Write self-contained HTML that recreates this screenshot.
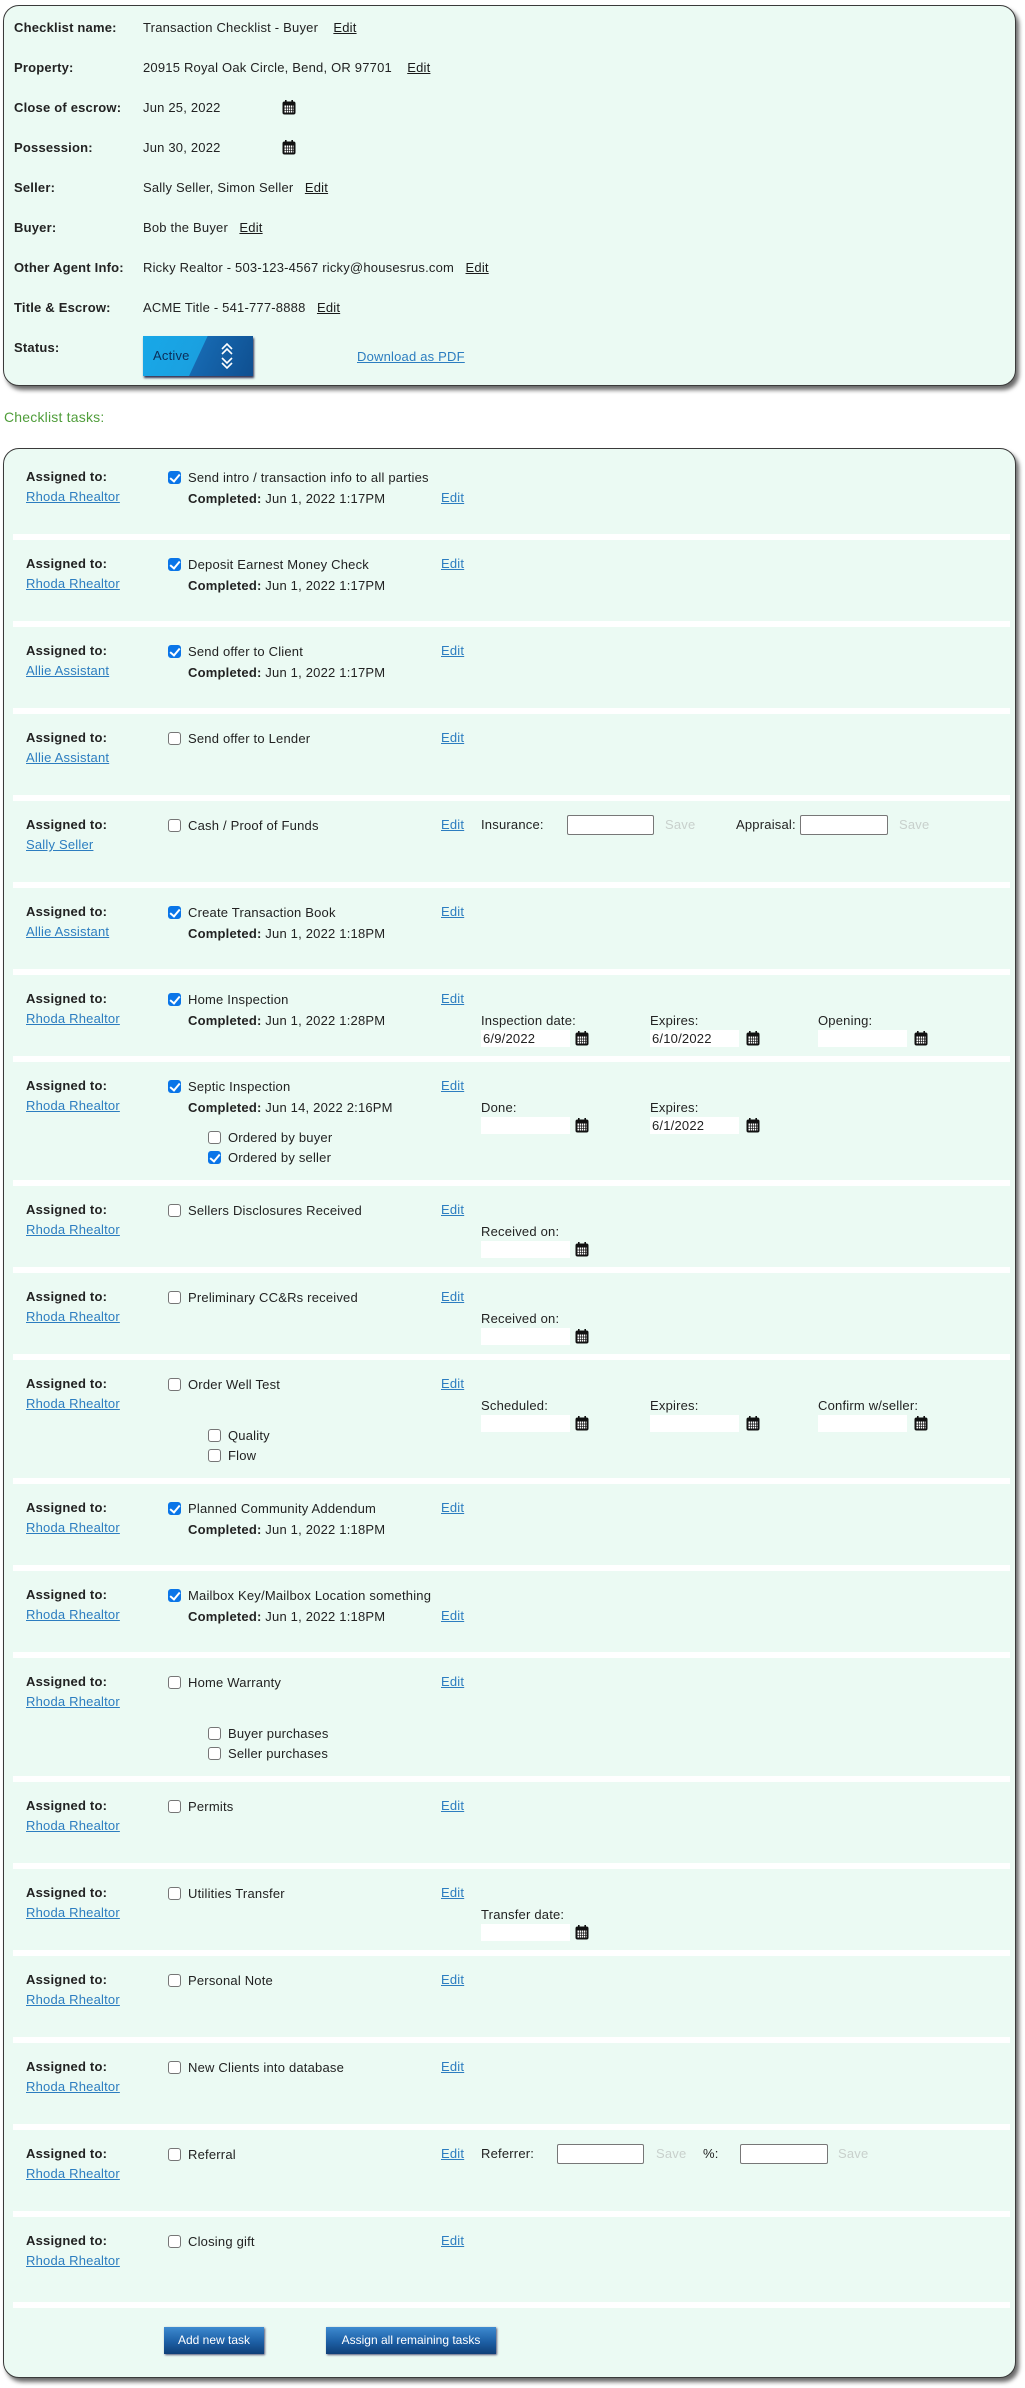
<!DOCTYPE html>
<html><head><meta charset="utf-8">
<style>
*{box-sizing:border-box;margin:0;padding:0}
body{width:1025px;height:2388px;background:#fff;font-family:"Liberation Sans",sans-serif;font-size:13px;letter-spacing:0.2px;color:#222;position:relative;overflow:hidden}
.panel{position:absolute;left:3px;width:1013px;background:#ebfaf3;border:1px solid #3a3a3a;border-radius:16px;box-shadow:3px 4px 4px #6a6a6a}
.a{position:absolute;white-space:nowrap;line-height:16px}
b{font-weight:bold}
.lnk{color:#2c7dc0;text-decoration:underline}
.ed{color:#1a1a1a;text-decoration:underline}
.row{position:absolute;left:0;width:1025px}
.band{position:absolute;left:13px;width:997px;height:6px;background:#fff}
.cb{position:absolute;width:13px;height:13px;border-radius:3px;border:1px solid #767676;background:#fff}
.cb.on{background:#0a75e8;border-color:#0a75e8}
.cb.on:after{content:"";position:absolute;left:3px;top:0px;width:4px;height:8px;border:solid #fff;border-width:0 2px 2px 0;transform:rotate(40deg)}
.inp{position:absolute;height:20px;background:#fff;border:1px solid #777;border-radius:2px}
.din{position:absolute;height:17px;width:89px;background:#fff;padding-left:2px;line-height:17px}
.cal{position:absolute;width:14px;height:15px}
.save{color:#c8d0cc}
.btn{position:absolute;height:27px;background:linear-gradient(#3d8ad0,#1d5fa5 55%,#0f3f78);color:#fff;text-align:center;line-height:27px;font-size:12px;letter-spacing:0;box-shadow:1px 1px 2px #557}
</style></head><body>
<svg width="0" height="0" style="position:absolute"><defs><symbol id="c" viewBox="0 0 14 15"><rect x="0.5" y="1.5" width="13" height="13" rx="2" fill="#111"/><rect x="3" y="0" width="1.6" height="3" fill="#111"/><rect x="9.4" y="0" width="1.6" height="3" fill="#111"/><rect x="2.5" y="5.5" width="9" height="7" fill="#fff"/><path d="M4.5 5.5v7M6.5 5.5v7M8.5 5.5v7M10.5 5.5v7M2.5 8h9M2.5 10.3h9" stroke="#111" stroke-width="0.7"/></symbol></defs></svg>

<div class="panel" style="top:5px;height:381px"></div>
<div class="a" style="left:14px;top:20px"><b>Checklist name:</b></div><div class="a" style="left:143px;top:20px">Transaction Checklist - Buyer &nbsp;&nbsp; <span class="ed">Edit</span></div>
<div class="a" style="left:14px;top:60px"><b>Property:</b></div><div class="a" style="left:143px;top:60px">20915 Royal Oak Circle, Bend, OR 97701 &nbsp;&nbsp; <span class="ed">Edit</span></div>
<div class="a" style="left:14px;top:100px"><b>Close of escrow:</b></div><div class="a" style="left:143px;top:100px">Jun 25, 2022</div><svg class="cal" style="left:282px;top:100px"><use href="#c"/></svg>
<div class="a" style="left:14px;top:140px"><b>Possession:</b></div><div class="a" style="left:143px;top:140px">Jun 30, 2022</div><svg class="cal" style="left:282px;top:140px"><use href="#c"/></svg>
<div class="a" style="left:14px;top:180px"><b>Seller:</b></div><div class="a" style="left:143px;top:180px">Sally Seller, Simon Seller &nbsp; <span class="ed">Edit</span></div>
<div class="a" style="left:14px;top:220px"><b>Buyer:</b></div><div class="a" style="left:143px;top:220px">Bob the Buyer &nbsp; <span class="ed">Edit</span></div>
<div class="a" style="left:14px;top:260px"><b>Other Agent Info:</b></div><div class="a" style="left:143px;top:260px">Ricky Realtor - 503-123-4567 ricky@housesrus.com &nbsp; <span class="ed">Edit</span></div>
<div class="a" style="left:14px;top:300px"><b>Title &amp; Escrow:</b></div><div class="a" style="left:143px;top:300px">ACME Title - 541-777-8888 &nbsp; <span class="ed">Edit</span></div>
<div class="a" style="left:14px;top:340px"><b>Status:</b></div>
<div style="position:absolute;left:143px;top:336px;width:110px;height:40px;background:linear-gradient(115deg,#18a8e8 0,#1aa0e0 50%,#1668b0 50.5%,#0f4f90);box-shadow:1px 2px 2px #335"></div>
<div class="a" style="left:153px;top:348px;color:#0b2e5a;font-size:13px">Active</div>
<svg style="position:absolute;left:220px;top:340px" width="14" height="32" viewBox="0 0 14 32"><path d="M2 9l5-5 5 5M2 14l5-5 5 5M2 18l5 5 5-5M2 23l5 5 5-5" fill="none" stroke="#fff" stroke-width="1.6"/></svg>
<div class="a lnk" style="left:357px;top:349px">Download as PDF</div>

<div class="a" style="left:4px;top:409px;color:#4f9d3a;font-size:14px">Checklist tasks:</div>

<div class="panel" style="top:448px;height:1930px"></div>

<div class="row" style="top:452px;height:87px">
<div class="a" style="left:26px;top:17px"><b>Assigned to:</b></div><div class="a lnk" style="left:26px;top:37px">Rhoda Rhealtor</div>
<div class="cb on" style="left:168px;top:19px"></div><div class="a" style="left:188px;top:18px">Send intro / transaction info to all parties</div>
<div class="a" style="left:188px;top:39px"><b>Completed:</b> Jun 1, 2022 1:17PM</div><div class="a lnk" style="left:441px;top:38px">Edit</div>
<div class="band" style="top:82px"></div></div>

<div class="row" style="top:539px;height:87px">
<div class="a" style="left:26px;top:17px"><b>Assigned to:</b></div><div class="a lnk" style="left:26px;top:37px">Rhoda Rhealtor</div>
<div class="cb on" style="left:168px;top:19px"></div><div class="a" style="left:188px;top:18px">Deposit Earnest Money Check</div>
<div class="a" style="left:188px;top:39px"><b>Completed:</b> Jun 1, 2022 1:17PM</div><div class="a lnk" style="left:441px;top:17px">Edit</div>
<div class="band" style="top:82px"></div></div>

<div class="row" style="top:626px;height:87px">
<div class="a" style="left:26px;top:17px"><b>Assigned to:</b></div><div class="a lnk" style="left:26px;top:37px">Allie Assistant</div>
<div class="cb on" style="left:168px;top:19px"></div><div class="a" style="left:188px;top:18px">Send offer to Client</div>
<div class="a" style="left:188px;top:39px"><b>Completed:</b> Jun 1, 2022 1:17PM</div><div class="a lnk" style="left:441px;top:17px">Edit</div>
<div class="band" style="top:82px"></div></div>

<div class="row" style="top:713px;height:87px">
<div class="a" style="left:26px;top:17px"><b>Assigned to:</b></div><div class="a lnk" style="left:26px;top:37px">Allie Assistant</div>
<div class="cb" style="left:168px;top:19px"></div><div class="a" style="left:188px;top:18px">Send offer to Lender</div>
<div class="a lnk" style="left:441px;top:17px">Edit</div>
<div class="band" style="top:82px"></div></div>

<div class="row" style="top:800px;height:87px">
<div class="a" style="left:26px;top:17px"><b>Assigned to:</b></div><div class="a lnk" style="left:26px;top:37px">Sally Seller</div>
<div class="cb" style="left:168px;top:19px"></div><div class="a" style="left:188px;top:18px">Cash / Proof of Funds</div>
<div class="a lnk" style="left:441px;top:17px">Edit</div>
<div class="a" style="left:481px;top:17px">Insurance:</div><div class="inp" style="left:567px;top:15px;width:87px"></div><div class="a save" style="left:665px;top:17px">Save</div>
<div class="a" style="left:736px;top:17px">Appraisal:</div><div class="inp" style="left:800px;top:15px;width:88px"></div><div class="a save" style="left:899px;top:17px">Save</div>
<div class="band" style="top:82px"></div></div>

<div class="row" style="top:887px;height:87px">
<div class="a" style="left:26px;top:17px"><b>Assigned to:</b></div><div class="a lnk" style="left:26px;top:37px">Allie Assistant</div>
<div class="cb on" style="left:168px;top:19px"></div><div class="a" style="left:188px;top:18px">Create Transaction Book</div>
<div class="a" style="left:188px;top:39px"><b>Completed:</b> Jun 1, 2022 1:18PM</div><div class="a lnk" style="left:441px;top:17px">Edit</div>
<div class="band" style="top:82px"></div></div>

<div class="row" style="top:974px;height:87px">
<div class="a" style="left:26px;top:17px"><b>Assigned to:</b></div><div class="a lnk" style="left:26px;top:37px">Rhoda Rhealtor</div>
<div class="cb on" style="left:168px;top:19px"></div><div class="a" style="left:188px;top:18px">Home Inspection</div>
<div class="a" style="left:188px;top:39px"><b>Completed:</b> Jun 1, 2022 1:28PM</div><div class="a lnk" style="left:441px;top:17px">Edit</div>
<div class="a" style="left:481px;top:39px">Inspection date:</div><div class="din" style="left:481px;top:56px">6/9/2022</div><svg class="cal" style="left:575px;top:57px"><use href="#c"/></svg>
<div class="a" style="left:650px;top:39px">Expires:</div><div class="din" style="left:650px;top:56px">6/10/2022</div><svg class="cal" style="left:746px;top:57px"><use href="#c"/></svg>
<div class="a" style="left:818px;top:39px">Opening:</div><div class="din" style="left:818px;top:56px"></div><svg class="cal" style="left:914px;top:57px"><use href="#c"/></svg>
<div class="band" style="top:82px"></div></div>

<div class="row" style="top:1061px;height:124px">
<div class="a" style="left:26px;top:17px"><b>Assigned to:</b></div><div class="a lnk" style="left:26px;top:37px">Rhoda Rhealtor</div>
<div class="cb on" style="left:168px;top:19px"></div><div class="a" style="left:188px;top:18px">Septic Inspection</div>
<div class="a" style="left:188px;top:39px"><b>Completed:</b> Jun 14, 2022 2:16PM</div><div class="a lnk" style="left:441px;top:17px">Edit</div>
<div class="cb" style="left:208px;top:70px"></div><div class="a" style="left:228px;top:69px">Ordered by buyer</div>
<div class="cb on" style="left:208px;top:90px"></div><div class="a" style="left:228px;top:89px">Ordered by seller</div>
<div class="a" style="left:481px;top:39px">Done:</div><div class="din" style="left:481px;top:56px"></div><svg class="cal" style="left:575px;top:57px"><use href="#c"/></svg>
<div class="a" style="left:650px;top:39px">Expires:</div><div class="din" style="left:650px;top:56px">6/1/2022</div><svg class="cal" style="left:746px;top:57px"><use href="#c"/></svg>
<div class="band" style="top:119px"></div></div>

<div class="row" style="top:1185px;height:87px">
<div class="a" style="left:26px;top:17px"><b>Assigned to:</b></div><div class="a lnk" style="left:26px;top:37px">Rhoda Rhealtor</div>
<div class="cb" style="left:168px;top:19px"></div><div class="a" style="left:188px;top:18px">Sellers Disclosures Received</div>
<div class="a lnk" style="left:441px;top:17px">Edit</div>
<div class="a" style="left:481px;top:39px">Received on:</div><div class="din" style="left:481px;top:56px"></div><svg class="cal" style="left:575px;top:57px"><use href="#c"/></svg>
<div class="band" style="top:82px"></div></div>

<div class="row" style="top:1272px;height:87px">
<div class="a" style="left:26px;top:17px"><b>Assigned to:</b></div><div class="a lnk" style="left:26px;top:37px">Rhoda Rhealtor</div>
<div class="cb" style="left:168px;top:19px"></div><div class="a" style="left:188px;top:18px">Preliminary CC&amp;Rs received</div>
<div class="a lnk" style="left:441px;top:17px">Edit</div>
<div class="a" style="left:481px;top:39px">Received on:</div><div class="din" style="left:481px;top:56px"></div><svg class="cal" style="left:575px;top:57px"><use href="#c"/></svg>
<div class="band" style="top:82px"></div></div>

<div class="row" style="top:1359px;height:124px">
<div class="a" style="left:26px;top:17px"><b>Assigned to:</b></div><div class="a lnk" style="left:26px;top:37px">Rhoda Rhealtor</div>
<div class="cb" style="left:168px;top:19px"></div><div class="a" style="left:188px;top:18px">Order Well Test</div>
<div class="a lnk" style="left:441px;top:17px">Edit</div>
<div class="cb" style="left:208px;top:70px"></div><div class="a" style="left:228px;top:69px">Quality</div>
<div class="cb" style="left:208px;top:90px"></div><div class="a" style="left:228px;top:89px">Flow</div>
<div class="a" style="left:481px;top:39px">Scheduled:</div><div class="din" style="left:481px;top:56px"></div><svg class="cal" style="left:575px;top:57px"><use href="#c"/></svg>
<div class="a" style="left:650px;top:39px">Expires:</div><div class="din" style="left:650px;top:56px"></div><svg class="cal" style="left:746px;top:57px"><use href="#c"/></svg>
<div class="a" style="left:818px;top:39px">Confirm w/seller:</div><div class="din" style="left:818px;top:56px"></div><svg class="cal" style="left:914px;top:57px"><use href="#c"/></svg>
<div class="band" style="top:119px"></div></div>

<div class="row" style="top:1483px;height:87px">
<div class="a" style="left:26px;top:17px"><b>Assigned to:</b></div><div class="a lnk" style="left:26px;top:37px">Rhoda Rhealtor</div>
<div class="cb on" style="left:168px;top:19px"></div><div class="a" style="left:188px;top:18px">Planned Community Addendum</div>
<div class="a" style="left:188px;top:39px"><b>Completed:</b> Jun 1, 2022 1:18PM</div><div class="a lnk" style="left:441px;top:17px">Edit</div>
<div class="band" style="top:82px"></div></div>

<div class="row" style="top:1570px;height:87px">
<div class="a" style="left:26px;top:17px"><b>Assigned to:</b></div><div class="a lnk" style="left:26px;top:37px">Rhoda Rhealtor</div>
<div class="cb on" style="left:168px;top:19px"></div><div class="a" style="left:188px;top:18px">Mailbox Key/Mailbox Location something</div>
<div class="a" style="left:188px;top:39px"><b>Completed:</b> Jun 1, 2022 1:18PM</div><div class="a lnk" style="left:441px;top:38px">Edit</div>
<div class="band" style="top:82px"></div></div>

<div class="row" style="top:1657px;height:124px">
<div class="a" style="left:26px;top:17px"><b>Assigned to:</b></div><div class="a lnk" style="left:26px;top:37px">Rhoda Rhealtor</div>
<div class="cb" style="left:168px;top:19px"></div><div class="a" style="left:188px;top:18px">Home Warranty</div>
<div class="a lnk" style="left:441px;top:17px">Edit</div>
<div class="cb" style="left:208px;top:70px"></div><div class="a" style="left:228px;top:69px">Buyer purchases</div>
<div class="cb" style="left:208px;top:90px"></div><div class="a" style="left:228px;top:89px">Seller purchases</div>
<div class="band" style="top:119px"></div></div>

<div class="row" style="top:1781px;height:87px">
<div class="a" style="left:26px;top:17px"><b>Assigned to:</b></div><div class="a lnk" style="left:26px;top:37px">Rhoda Rhealtor</div>
<div class="cb" style="left:168px;top:19px"></div><div class="a" style="left:188px;top:18px">Permits</div>
<div class="a lnk" style="left:441px;top:17px">Edit</div>
<div class="band" style="top:82px"></div></div>

<div class="row" style="top:1868px;height:87px">
<div class="a" style="left:26px;top:17px"><b>Assigned to:</b></div><div class="a lnk" style="left:26px;top:37px">Rhoda Rhealtor</div>
<div class="cb" style="left:168px;top:19px"></div><div class="a" style="left:188px;top:18px">Utilities Transfer</div>
<div class="a lnk" style="left:441px;top:17px">Edit</div>
<div class="a" style="left:481px;top:39px">Transfer date:</div><div class="din" style="left:481px;top:56px"></div><svg class="cal" style="left:575px;top:57px"><use href="#c"/></svg>
<div class="band" style="top:82px"></div></div>

<div class="row" style="top:1955px;height:87px">
<div class="a" style="left:26px;top:17px"><b>Assigned to:</b></div><div class="a lnk" style="left:26px;top:37px">Rhoda Rhealtor</div>
<div class="cb" style="left:168px;top:19px"></div><div class="a" style="left:188px;top:18px">Personal Note</div>
<div class="a lnk" style="left:441px;top:17px">Edit</div>
<div class="band" style="top:82px"></div></div>

<div class="row" style="top:2042px;height:87px">
<div class="a" style="left:26px;top:17px"><b>Assigned to:</b></div><div class="a lnk" style="left:26px;top:37px">Rhoda Rhealtor</div>
<div class="cb" style="left:168px;top:19px"></div><div class="a" style="left:188px;top:18px">New Clients into database</div>
<div class="a lnk" style="left:441px;top:17px">Edit</div>
<div class="band" style="top:82px"></div></div>

<div class="row" style="top:2129px;height:87px">
<div class="a" style="left:26px;top:17px"><b>Assigned to:</b></div><div class="a lnk" style="left:26px;top:37px">Rhoda Rhealtor</div>
<div class="cb" style="left:168px;top:19px"></div><div class="a" style="left:188px;top:18px">Referral</div>
<div class="a lnk" style="left:441px;top:17px">Edit</div>
<div class="a" style="left:481px;top:17px">Referrer:</div><div class="inp" style="left:557px;top:15px;width:87px"></div><div class="a save" style="left:656px;top:17px">Save</div>
<div class="a" style="left:703px;top:17px">%:</div><div class="inp" style="left:740px;top:15px;width:88px"></div><div class="a save" style="left:838px;top:17px">Save</div>
<div class="band" style="top:82px"></div></div>

<div class="row" style="top:2216px;height:87px">
<div class="a" style="left:26px;top:17px"><b>Assigned to:</b></div><div class="a lnk" style="left:26px;top:37px">Rhoda Rhealtor</div>
<div class="cb" style="left:168px;top:19px"></div><div class="a" style="left:188px;top:18px">Closing gift</div>
<div class="a lnk" style="left:441px;top:17px">Edit</div>
<div class="band" style="top:86px"></div></div>

<div class="btn" style="left:164px;top:2327px;width:100px">Add new task</div>
<div class="btn" style="left:326px;top:2327px;width:170px">Assign all remaining tasks</div>
</body></html>
